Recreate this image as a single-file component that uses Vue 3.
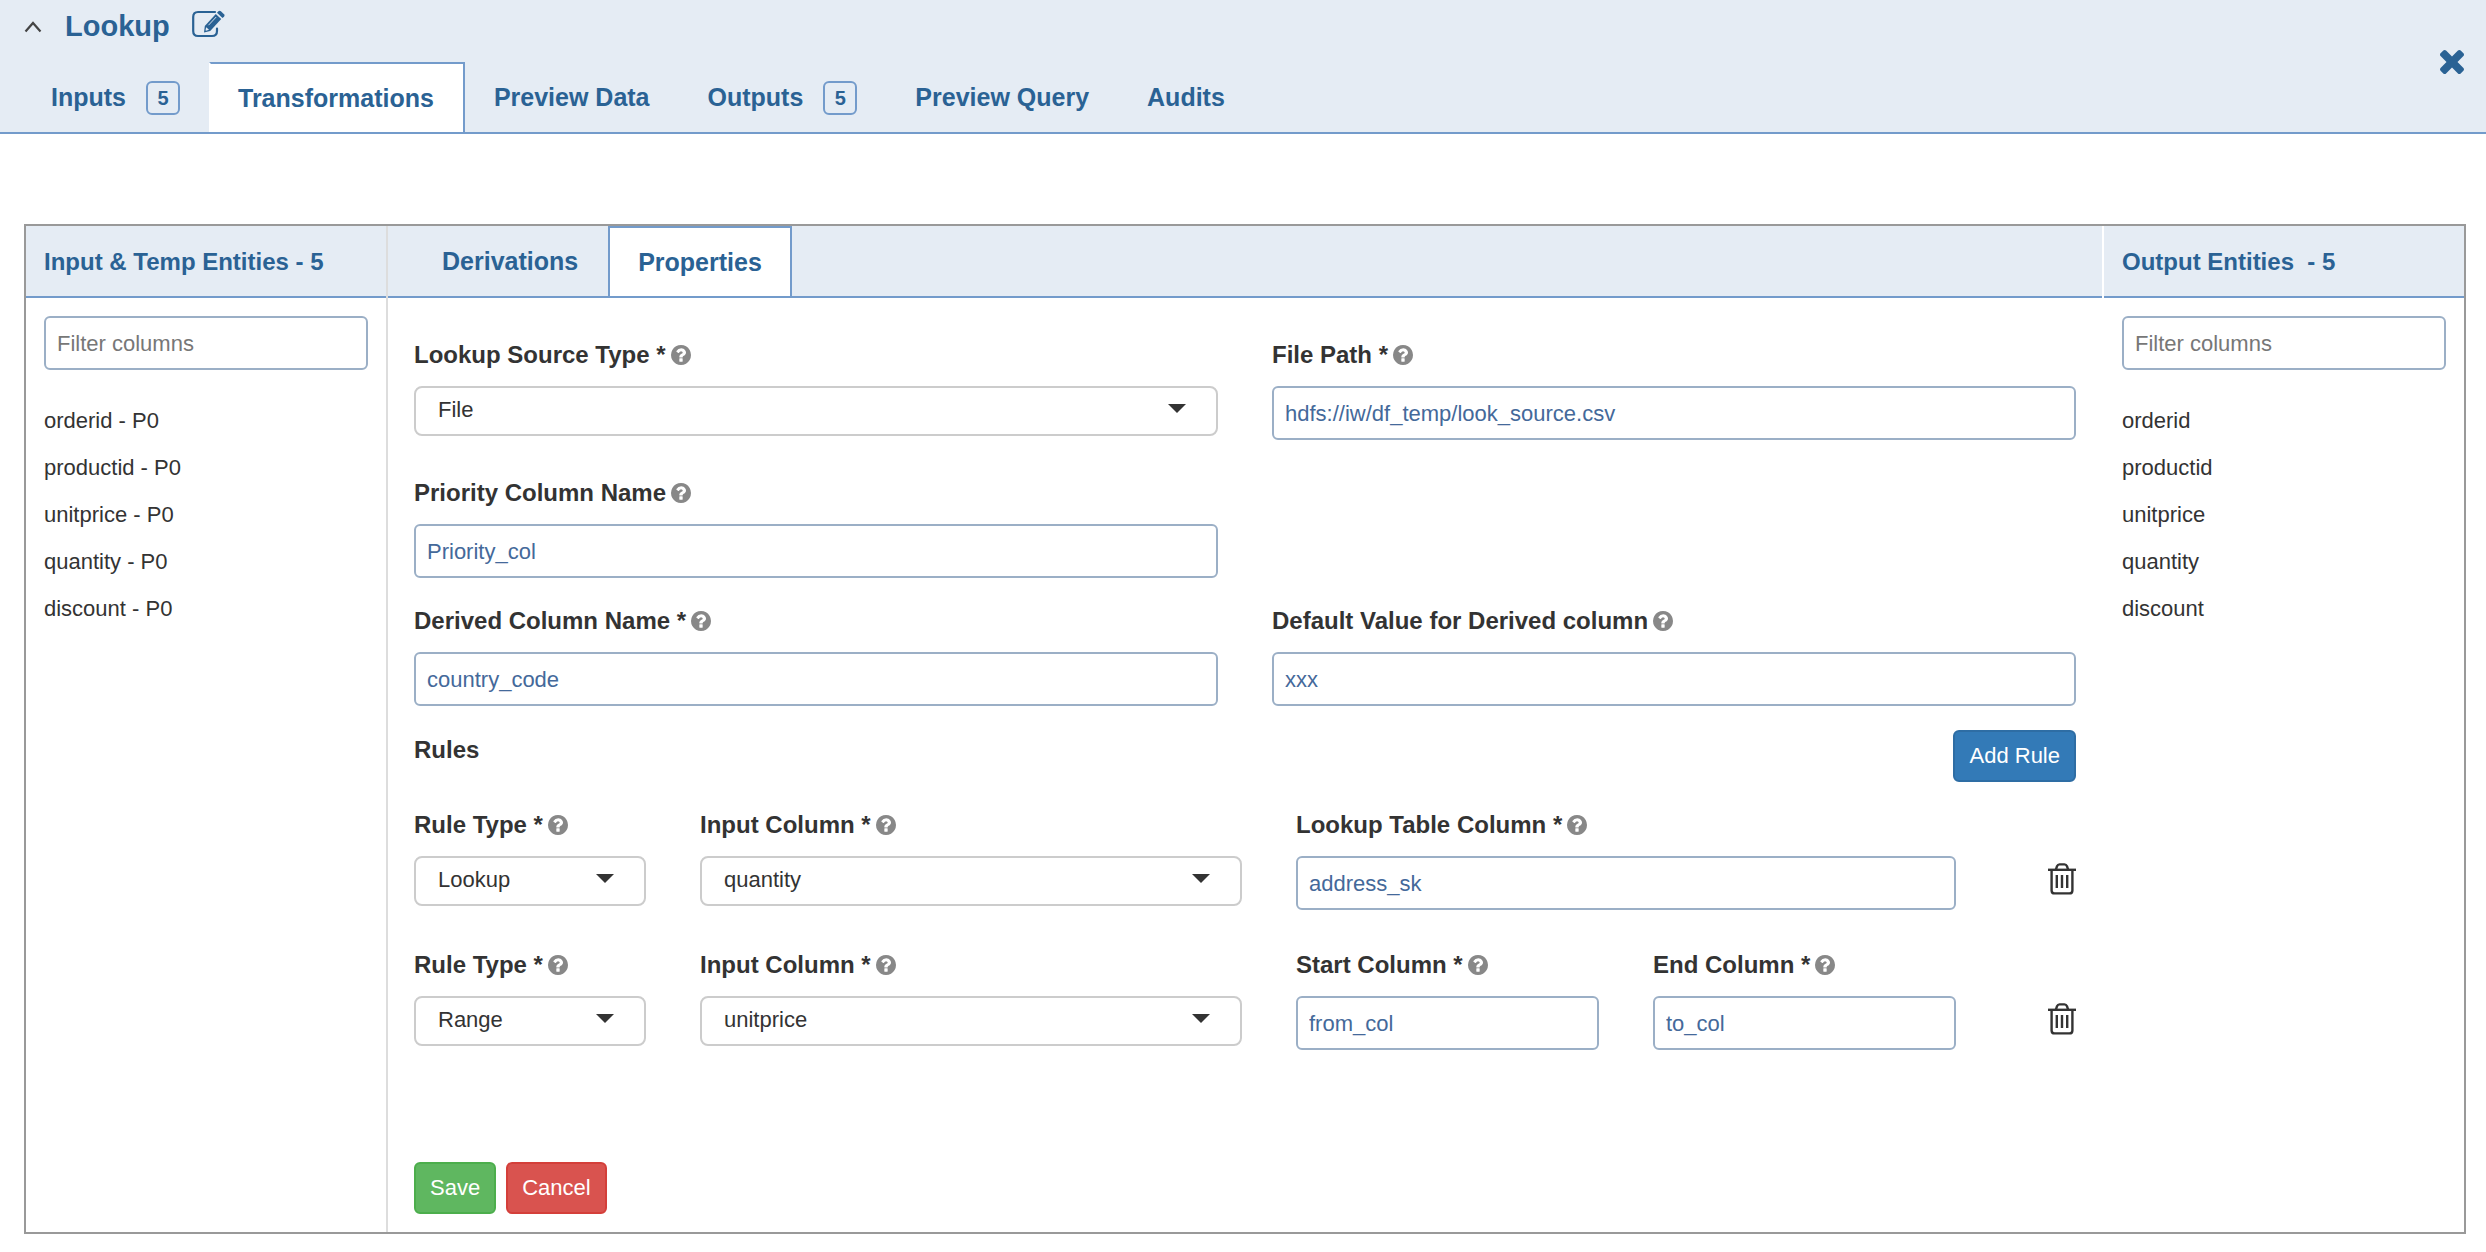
<script setup>
import { h, reactive, ref } from 'vue'

const tabs = [
  { name: 'Inputs', count: 5 },
  { name: 'Transformations' },
  { name: 'Preview Data' },
  { name: 'Outputs', count: 5 },
  { name: 'Preview Query' },
  { name: 'Audits' },
]
const activeTab = ref('Transformations')

const subTabs = ['Derivations', 'Properties']
const activeSubTab = ref('Properties')

const columns = ['orderid', 'productid', 'unitprice', 'quantity', 'discount']
const inputFilter = ref('')
const outputFilter = ref('')

const form = reactive({
  sourceType: 'File',
  filePath: 'hdfs://iw/df_temp/look_source.csv',
  priorityColumn: 'Priority_col',
  derivedColumn: 'country_code',
  defaultValue: 'xxx',
})

const rules = ref([
  { id: 1, type: 'Lookup', column: 'quantity', lookupColumn: 'address_sk', start: '', end: '' },
  { id: 2, type: 'Range', column: 'unitprice', lookupColumn: '', start: 'from_col', end: 'to_col' },
])

function visible(filter) {
  return columns.filter((c) => c.includes(filter.trim()))
}

function addRule() {
  rules.value.push({ id: Date.now(), type: 'Lookup', column: 'orderid', lookupColumn: '', start: '', end: '' })
}

function removeRule(id) {
  rules.value = rules.value.filter((r) => r.id !== id)
}

const helpPath =
  'M1024 1376v-192q0-14-9-23t-23-9h-192q-14 0-23 9t-9 23v192q0 14 9 23t23 9h192q14 0 23-9t9-23zm256-672q0-88-55.5-163t-138.5-116-170-41q-243 0-371 213-15 24 8 42l132 100q7 6 19 6 16 0 25-12 53-68 86-92 34-24 86-24 48 0 85.5 26t37.5 59q0 38-20 61t-68 45q-63 28-115.5 86.5t-52.5 125.5v36q0 14 9 23t23 9h192q14 0 23-9t9-23q0-19 21.5-49.5t54.5-49.5q32-18 49-28.5t46-35 44.5-48 28-60.5 12.5-81zm384 192q0 209-103 385.5t-279.5 279.5-385.5 103-385.5-103-279.5-279.5-103-385.5 103-385.5 279.5-279.5 385.5-103 385.5 103 279.5 279.5 103 385.5z'

const HelpIcon = () =>
  h('svg', { width: 20, height: 20, viewBox: '128 128 1536 1536', fill: '#888', 'aria-hidden': 'true' }, [
    h('path', { d: helpPath }),
  ])
</script>

<template>
  <div class="page">
    <header class="header">
      <div class="header-main">
        <div class="title-row">
          <button class="icon-btn collapse" type="button" aria-label="Collapse">
            <svg width="18" height="12" viewBox="0 0 18 12" fill="none">
              <path d="M1.5 10.5 L9 2 L16.5 10.5" stroke="#444" stroke-width="2.2" />
            </svg>
          </button>
          <h1 class="title">Lookup</h1>
          <button class="icon-btn" type="button" aria-label="Edit name">
            <svg width="34" height="28" viewBox="0 0 34 28" fill="none">
              <path
                d="M23 2 H6 Q1.2 2 1.2 7 V21 Q1.2 26 6 26 H20 Q25 26 25 21 V18.5"
                stroke="#2a6294"
                stroke-width="2.2"
                stroke-linecap="round"
              />
              <path d="M12 22.5 L12.8 16 L23.8 4 L29.2 9 L18.2 21 Z" fill="#2a6294" />
              <path d="M25 2.8 L26.4 1.3 Q27.6 0.2 28.9 1.3 L32 4.2 Q33.2 5.5 32 6.7 L30.5 8 Z" fill="#2a6294" />
              <path d="M14.2 17.2 L17 19.8 L14 20.7 L13.5 20.3 Z" fill="#e5ecf4" />
              <path d="M16.5 15.2 L24.2 7" stroke="#e5ecf4" stroke-width="0.9" />
            </svg>
          </button>
        </div>
        <nav class="tabs main-tabs" role="tablist">
          <button
            v-for="tab in tabs"
            :key="tab.name"
            class="tab"
            :class="{ active: tab.name === activeTab }"
            type="button"
            role="tab"
            :aria-selected="tab.name === activeTab"
            @click="activeTab = tab.name"
          >
            {{ tab.name }}
            <span v-if="tab.count" class="count">{{ tab.count }}</span>
          </button>
        </nav>
      </div>
      <button class="icon-btn close" type="button" aria-label="Close">
        <svg width="24" height="24" viewBox="302 366 1188 1188" fill="#2a6294">
          <path
            d="M1490 1322q0 40-28 68l-136 136q-28 28-68 28t-68-28l-294-294-294 294q-28 28-68 28t-68-28l-136-136q-28-28-28-68t28-68l294-294-294-294q-28-28-28-68t28-68l136-136q28-28 68-28t68 28l294 294 294-294q28-28 68-28t68 28l136 136q28 28 28 68t-28 68l-294 294 294 294q28 28 28 68z"
          />
        </svg>
      </button>
    </header>

    <main class="panel">
      <aside class="side side-left">
        <h2 class="side-title">Input &amp; Temp Entities - 5</h2>
        <div class="side-body">
          <input v-model="inputFilter" class="text-input" type="text" placeholder="Filter columns" aria-label="Filter input columns" />
          <ul class="columns">
            <li v-for="c in visible(inputFilter)" :key="c">{{ c }} - P0</li>
          </ul>
        </div>
      </aside>

      <section class="center">
        <nav class="tabs sub-tabs" role="tablist">
          <button
            v-for="name in subTabs"
            :key="name"
            class="tab"
            :class="{ active: name === activeSubTab }"
            type="button"
            role="tab"
            :aria-selected="name === activeSubTab"
            @click="activeSubTab = name"
          >
            {{ name }}
          </button>
        </nav>

        <form class="form" @submit.prevent>
          <div class="row two">
            <div class="field">
              <label for="source-type">Lookup Source Type * <HelpIcon /></label>
              <div class="select-box">
                <select id="source-type" v-model="form.sourceType">
                  <option>File</option>
                  <option>Table</option>
                </select>
              </div>
            </div>
            <div class="field">
              <label for="file-path">File Path * <HelpIcon /></label>
              <input id="file-path" v-model="form.filePath" class="text-input" type="text" />
            </div>
          </div>

          <div class="row two spaced">
            <div class="field">
              <label for="priority-column">Priority Column Name <HelpIcon /></label>
              <input id="priority-column" v-model="form.priorityColumn" class="text-input" type="text" />
            </div>
          </div>

          <div class="row two">
            <div class="field">
              <label for="derived-column">Derived Column Name * <HelpIcon /></label>
              <input id="derived-column" v-model="form.derivedColumn" class="text-input" type="text" />
            </div>
            <div class="field">
              <label for="default-value">Default Value for Derived column <HelpIcon /></label>
              <input id="default-value" v-model="form.defaultValue" class="text-input" type="text" />
            </div>
          </div>

          <div class="rules-head">
            <h3>Rules</h3>
            <button class="btn primary" type="button" @click="addRule">Add Rule</button>
          </div>

          <div v-for="rule in rules" :key="rule.id" class="row rule">
            <div class="field">
              <label :for="`type-${rule.id}`">Rule Type * <HelpIcon /></label>
              <div class="select-box">
                <select :id="`type-${rule.id}`" v-model="rule.type">
                  <option>Lookup</option>
                  <option>Range</option>
                </select>
              </div>
            </div>
            <div class="field">
              <label :for="`column-${rule.id}`">Input Column * <HelpIcon /></label>
              <div class="select-box">
                <select :id="`column-${rule.id}`" v-model="rule.column">
                  <option v-for="c in columns" :key="c">{{ c }}</option>
                </select>
              </div>
            </div>
            <div v-if="rule.type === 'Lookup'" class="field">
              <label :for="`lookup-${rule.id}`">Lookup Table Column * <HelpIcon /></label>
              <input :id="`lookup-${rule.id}`" v-model="rule.lookupColumn" class="text-input" type="text" />
            </div>
            <div v-else class="row two">
              <div class="field">
                <label :for="`start-${rule.id}`">Start Column * <HelpIcon /></label>
                <input :id="`start-${rule.id}`" v-model="rule.start" class="text-input" type="text" />
              </div>
              <div class="field">
                <label :for="`end-${rule.id}`">End Column * <HelpIcon /></label>
                <input :id="`end-${rule.id}`" v-model="rule.end" class="text-input" type="text" />
              </div>
            </div>
            <button class="icon-btn remove" type="button" aria-label="Remove rule" @click="removeRule(rule.id)">
              <svg width="28" height="32" viewBox="0 0 28 32" fill="none" stroke="#333" stroke-width="2.4">
                <path d="M0 6.8 H28" />
                <path d="M8 6.4 L9 3.2 Q9.8 1.4 11.6 1.4 H16.4 Q18.2 1.4 19 3.2 L20 6.4" />
                <path d="M3.6 7 V27.4 Q3.6 30.4 6.6 30.4 H21.4 Q24.4 30.4 24.4 27.4 V7" />
                <path d="M8.8 12 V25 M14 12 V25 M19.2 12 V25" />
              </svg>
            </button>
          </div>

          <div class="actions">
            <button class="btn success" type="submit">Save</button>
            <button class="btn danger" type="button">Cancel</button>
          </div>
        </form>
      </section>

      <aside class="side side-right">
        <h2 class="side-title">Output Entities&nbsp; - 5</h2>
        <div class="side-body">
          <input v-model="outputFilter" class="text-input" type="text" placeholder="Filter columns" aria-label="Filter output columns" />
          <ul class="columns">
            <li v-for="c in visible(outputFilter)" :key="c">{{ c }}</li>
          </ul>
        </div>
      </aside>
    </main>
  </div>
</template>

<style>
body {
  margin: 0;
  background: #fff;
}
</style>

<style scoped>
.page,
.page * {
  box-sizing: border-box;
}

.page {
  color: #333;
  font-family: 'Liberation Sans', Arial, sans-serif;
  font-size: 22px;
}

button,
input,
select {
  font: inherit;
}

h1,
h2,
h3,
ul {
  margin: 0;
  padding: 0;
}

.icon-btn {
  display: flex;
  padding: 0;
  border: 0;
  background: none;
  cursor: pointer;
}

.header {
  display: flex;
  justify-content: space-between;
  align-items: flex-start;
  background: #e5ecf4;
  border-bottom: 2px solid #739bcb;
}

.title-row {
  display: flex;
  align-items: center;
  height: 48px;
  margin-bottom: 14px;
  padding-left: 24px;
}

.title {
  margin: 4px 22px 0 23px;
  color: #2a6294;
  font-size: 29px;
  line-height: 36px;
}

.collapse {
  margin-top: 6px;
}

.close {
  margin: 50px 22px 0 0;
}

.tabs {
  display: flex;
  height: 70px;
}

.main-tabs {
  padding-left: 22px;
}

.tab {
  display: flex;
  align-items: center;
  gap: 20px;
  padding: 0 27px 2px;
  border: 2px solid transparent;
  border-bottom: 0;
  background: none;
  color: #2a6294;
  font-size: 25px;
  font-weight: bold;
  cursor: pointer;
}

.tab.active {
  padding-bottom: 0;
  border-color: #739bcb;
  background: #fff;
}

.main-tabs .tab.active {
  padding-right: 29px;
  border-left-color: #fff;
}

.count {
  width: 34px;
  margin-top: 2px;
  border: 2px solid #739bcb;
  border-radius: 6px;
  font-size: 20px;
  line-height: 30px;
  text-align: center;
}

.panel {
  display: grid;
  grid-template-columns: 362px minmax(0, 1fr) 362px;
  margin: 90px 20px 18px 24px;
  border: 2px solid #999;
}

.side-left {
  border-right: 2px solid #ddd;
}

.side-right {
  border-left: 2px solid #fff;
}

.side-title {
  padding: 2px 0 0 18px;
  background: #e5ecf4;
  border-bottom: 2px solid #739bcb;
  color: #2a6294;
  font-size: 24px;
  line-height: 68px;
}

.side-body {
  padding: 18px;
}

.text-input {
  display: block;
  width: 100%;
  height: 54px;
  padding: 2px 11px 0;
  border: 2px solid #9bafc6;
  border-radius: 6px;
  background: #fff;
  color: #44699a;
}

.text-input::placeholder {
  color: #777;
  opacity: 1;
}

.columns {
  margin-top: 27px;
  list-style: none;
  line-height: 47px;
}

.sub-tabs {
  height: 72px;
  padding-left: 24px;
  background: #e5ecf4;
  border-bottom: 2px solid #739bcb;
}

.sub-tabs .tab {
  padding-right: 28px;
  padding-left: 28px;
}

.form {
  padding: 41px 26px 18px;
}

.row {
  display: grid;
  column-gap: 54px;
}

.two {
  grid-template-columns: repeat(2, minmax(0, 1fr));
}

.spaced {
  margin: 37px 0 27px;
}

.rule {
  grid-template-columns: minmax(0, 232fr) minmax(0, 542fr) minmax(0, 660fr) minmax(0, 66fr);
  margin-top: 27px;
}

.rule + .rule {
  margin-top: 39px;
}

label {
  display: flex;
  align-items: center;
  gap: 5px;
  margin-bottom: 15px;
  font-size: 24px;
  font-weight: bold;
  line-height: 32px;
}

.select-box {
  position: relative;
}

.select-box::after {
  content: '';
  position: absolute;
  top: 18px;
  right: 32px;
  border: 9px solid transparent;
  border-top-color: #333;
  border-bottom: 0;
  pointer-events: none;
}

select {
  display: block;
  width: 100%;
  height: 50px;
  padding: 0 56px 4px 22px;
  border: 2px solid #ccc;
  border-radius: 8px;
  background: #fff;
  color: #333;
  appearance: none;
}

.remove {
  align-self: end;
  justify-self: end;
  margin-bottom: 15px;
}

.rules-head {
  display: flex;
  justify-content: space-between;
  align-items: flex-start;
  margin-top: 24px;
}

.rules-head h3 {
  font-size: 24px;
  line-height: 40px;
}

.btn {
  height: 52px;
  padding: 0 14px;
  border: 2px solid;
  border-radius: 6px;
  color: #fff;
  cursor: pointer;
}

.primary {
  background: #337ab7;
  border-color: #2e6da4;
}

.success {
  background: #5fb760;
  border-color: #4cae4c;
}

.danger {
  background: #d9534f;
  border-color: #d43f3a;
}

.actions {
  display: flex;
  gap: 10px;
  margin-top: 112px;
}
</style>
